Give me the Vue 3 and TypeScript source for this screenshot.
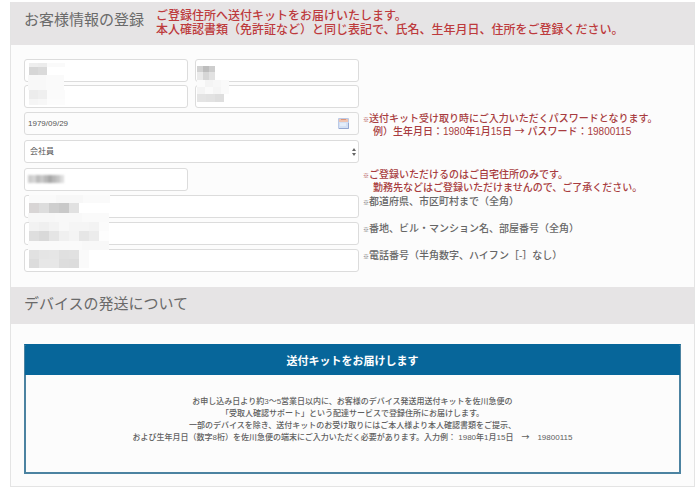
<script setup lang="ts">
import { ref } from 'vue'

interface Cell {
  x: number
  y: number
  w: number
  h: number
  c: string
}

const lastName = ref('')
const firstName = ref('')
const lastKana = ref('')
const firstKana = ref('')
const birthday = ref('1979/09/29')
const job = ref('会社員')
const postcode = ref('')
const address = ref('')
const building = ref('')
const phone = ref('')

// One strip of equally wide cells, left to right.
function strip(x: number, y: number, w: number, h: number, colors: string[]): Cell[] {
  return colors.map((c, i) => ({ x: x + i * w, y, w, h, c }))
}

// Pixelation that hides the personal values.
const mosaic: Cell[] = [
  ...strip(5, 4, 9, 4, ['#eeeeee', '#ececec', '#fafafa', '#fafafa']),
  ...strip(5, 8, 9, 8, ['#d6d6d6', '#dadada']),
  ...strip(4, 16, 18, 15, ['#f8f8f8', '#fafafa']),
  ...strip(5, 31, 9, 9, ['#ececec', '#efefef', '#fbfbfb', '#fbfbfb']),
  ...strip(5, 40, 9, 6, ['#f5f5f5', '#f7f7f7', '#fcfcfc', '#fcfcfc']),
  ...strip(173, 7, 6, 6, ['#d2d2d2', '#bdbdbd', '#cdcdcd']),
  ...strip(173, 13, 6, 8, ['#eaeaea', '#d6d6d6', '#e2e2e2']),
  ...strip(173, 21, 8, 7, ['#fbfbfb', '#f4f4f4', '#f7f7f7', '#fafafa']),
  ...strip(173, 28, 8, 7, ['#f4f4f4', '#fafafa', '#f5f5f5', '#fafafa']),
  ...strip(173, 35, 9, 8, ['#e4e4e4', '#e2e2e2', '#dedede']),
  ...strip(5, 136, 27, 8, ['#fafafa', '#f7f7f7', '#fafafa']),
  ...strip(5, 144, 10, 10, ['#d8d5d5', '#dddddd', '#cecece', '#c9c9c9', '#e1e1e1']),
  ...strip(4, 154, 27, 9, ['#f7f7f7', '#f8f8f8', '#fafafa']),
  ...strip(5, 163, 10, 9, ['#f2f2f2', '#efefef', '#f3f3f3', '#f8f8f8', '#f5f5f5', '#f5f5f5', '#f3f3f3', '#fbfbfb']),
  ...strip(5, 172, 10, 10, ['#dedede', '#d9d9d9', '#e5e5e5', '#f0f0f0', '#f4f4f4', '#e6e6e6', '#ececec', '#fdfdfd']),
  ...strip(4, 182, 27, 9, ['#fafafa', '#fafafa', '#f8f8f8']),
  ...strip(5, 191, 10, 9, ['#e1e1e1', '#e5e5e5', '#e6e6e6', '#e0e0e0', '#e1e1e1', '#fafafa']),
  ...strip(5, 200, 10, 9, ['#dcdcdc', '#e7e7e7', '#e7e7e7', '#dddddd', '#dcdcdc', '#fafafa']),
]

const softened: Cell[] = [
  ...strip(4, 116, 4, 8, ['#cccccc', '#d5d5d5', '#bcbcbc', '#c9c9c9', '#b8b8b8', '#a8a8a8', '#b8b8b8', '#c6c6c6', '#dddddd']),
]
</script>

<template>
  <main class="panel">
    <header class="bar">
      <h2 class="title">お客様情報の登録</h2>
      <p class="alert">
        ご登録住所へ送付キットをお届けいたします。<br />
        本人確認書類（免許証など）と同じ表記で、氏名、生年月日、住所をご登録ください。
      </p>
    </header>

    <form class="form" @submit.prevent>
      <div class="fields">
        <div class="group names">
          <div class="row">
            <div class="pair">
              <input v-model="lastName" class="field" type="text" aria-label="姓" />
              <input v-model="firstName" class="field" type="text" aria-label="名" />
            </div>
          </div>
          <div class="row">
            <div class="pair">
              <input v-model="lastKana" class="field" type="text" aria-label="セイ" />
              <input v-model="firstKana" class="field" type="text" aria-label="メイ" />
            </div>
          </div>
        </div>

        <div class="group profile">
          <div class="row">
            <div class="control">
              <input id="birthday" v-model="birthday" class="field dated" type="text" />
              <svg class="calendar" viewBox="0 0 11 11" aria-hidden="true">
                <rect x="0" y="0" width="11" height="11" rx="1" fill="#bccae6" />
                <rect x="1" y="1" width="9" height="9" fill="#d3e0f4" />
                <rect x="1" y="1" width="9" height="3" fill="#efc4b2" />
                <rect x="3" y="1" width="5" height="1" fill="#dd967a" />
                <rect x="2" y="5" width="6" height="3" fill="#e3edfa" />
                <path d="M1 10.5h9.5V5" fill="none" stroke="#93a7d2" />
              </svg>
            </div>
            <label class="note red" for="birthday">
              <span class="mark">※</span>送付キット受け取り時にご入力いただくパスワードとなります。
              <span class="indent">例）生年月日：1980年1月15日 <span class="arrow">→</span> パスワード：19800115</span>
            </label>
          </div>
          <div class="row">
            <div class="control">
              <select v-model="job" class="field select" aria-label="職業">
                <option>会社員</option>
              </select>
              <svg class="arrows" viewBox="0 0 4 8" aria-hidden="true">
                <path d="M0 3L2 0L4 3ZM0 5L2 8L4 5Z" fill="#666" />
              </svg>
            </div>
          </div>
        </div>

        <div class="group address">
          <div class="row">
            <div class="pair">
              <input id="postcode" v-model="postcode" class="field" type="text" />
            </div>
            <label class="note red" for="postcode">
              <span class="mark">※</span>ご登録いただけるのはご自宅住所のみです。
              <span class="indent">勤務先などはご登録いただけませんので、ご了承ください。</span>
            </label>
          </div>
          <div class="row">
            <input id="address" v-model="address" class="field" type="text" />
            <label class="note" for="address"><span class="mark">※</span>都道府県、市区町村まで（全角）</label>
          </div>
          <div class="row">
            <input id="building" v-model="building" class="field" type="text" />
            <label class="note" for="building"><span class="mark">※</span>番地、ビル・マンション名、部屋番号（全角）</label>
          </div>
          <div class="row">
            <input id="phone" v-model="phone" class="field" type="text" />
            <label class="note" for="phone"><span class="mark">※</span>電話番号（半角数字、ハイフン［-］なし）</label>
          </div>
        </div>

        <svg class="mosaic" width="240" height="213" viewBox="0 0 240 213" aria-hidden="true">
          <rect v-for="(m, i) in mosaic" :key="i" :x="m.x" :y="m.y" :width="m.w" :height="m.h" :fill="m.c" />
          <g class="soft">
            <rect v-for="(m, i) in softened" :key="i" :x="m.x" :y="m.y" :width="m.w" :height="m.h" :fill="m.c" />
          </g>
        </svg>
      </div>
    </form>

    <header class="bar device">
      <h2 class="title">デバイスの発送について</h2>
    </header>

    <div class="delivery">
      <section class="card">
        <h3 class="card-title">送付キットをお届けします</h3>
        <p class="card-text">
          お申し込み日より約3〜5営業日以内に、お客様のデバイス発送用送付キットを佐川急便の<br />
          「受取人確認サポート」という配達サービスで登録住所にお届けします。<br />
          一部のデバイスを除き、送付キットのお受け取りにはご本人様より本人確認書類をご提示、<br />
          および生年月日（数字8桁）を佐川急便の端末にご入力いただく必要があります。入力例： 1980年1月15日　<span class="arrow">→</span>　19800115
        </p>
      </section>
    </div>
  </main>
</template>

<style>
body {
  background: #fff;
}
</style>

<style scoped>
.panel {
  margin: 2px 5px 5px 10px;
  border: 1px solid #e4e4e4;
  border-top: 0;
  background: #fcfcfc;
  color: #666;
  font-family: "Liberation Sans", "Noto Sans CJK JP", sans-serif;
  line-height: 12px;
}

.panel * {
  box-sizing: border-box;
}

.bar {
  display: flex;
  gap: 12px;
  padding: 7px 13px 8px;
  background: #e6e4e5;
}

.device {
  padding: 6px 13px 9px;
}

.title {
  margin: 0;
  font-size: 15px;
  font-weight: 400;
  line-height: 22px;
  white-space: nowrap;
  color: #6a6a6a;
}

.alert {
  margin: 0;
  font-size: 12px;
  font-weight: 500;
  line-height: 14px;
  white-space: nowrap;
  color: #bd3a3c;
}

.form {
  padding: 14px 13px 15px;
}

.fields {
  position: relative;
  display: flex;
  flex-direction: column;
}

.group {
  display: grid;
}

.names {
  gap: 3px;
  margin-bottom: 4px;
}

.profile {
  gap: 5px;
  margin-bottom: 5px;
}

.address {
  gap: 4px;
}

.row {
  display: grid;
  grid-template-columns: minmax(0, 335fr) minmax(0, 318fr);
  column-gap: 4px;
  height: 23px;
}

.pair {
  display: grid;
  grid-template-columns: 1fr 1fr;
  gap: 7px;
}

.control {
  position: relative;
}

.field {
  display: block;
  width: 100%;
  height: 23px;
  margin: 0;
  padding: 0 3px;
  border: 1px solid #dcdcdc;
  border-radius: 3px;
  background: #fff;
  color: #555;
  font-family: inherit;
  font-size: 8px;
}

.dated {
  background: #fcfcfc;
}

.select {
  appearance: none;
  padding: 0 5px;
}

.calendar {
  position: absolute;
  top: 6px;
  right: 10px;
  width: 11px;
  height: 11px;
}

.arrows {
  position: absolute;
  top: 8px;
  right: 3px;
  width: 4px;
  height: 8px;
  pointer-events: none;
}

.note {
  padding-top: 1px;
  font-size: 10px;
  font-weight: 500;
  line-height: 12px;
  white-space: nowrap;
}

.red {
  color: #a83c40;
}

.mark {
  font-size: 6px;
  font-weight: 700;
}

.arrow {
  font-family: "Noto Sans CJK JP", sans-serif;
  line-height: 1;
}

.indent {
  display: block;
  padding-left: 10px;
}

.mosaic {
  position: absolute;
  top: 0;
  left: 0;
  pointer-events: none;
  shape-rendering: crispEdges;
}

.soft {
  filter: blur(1px);
}

.delivery {
  padding: 20px 13px 12px;
}

.card {
  border: 2px solid #4c83a1;
  border-top-color: #07669a;
}

.card-title {
  margin: 0 -1px;
  padding: 8px 0 7px;
  background: #07669a;
  color: #fff;
  font-size: 11px;
  font-weight: 700;
  line-height: 14px;
  text-align: center;
}

.card-text {
  margin: 0;
  padding: 21px 0 28px;
  font-size: 8px;
  font-weight: 500;
  line-height: 12px;
  text-align: center;
  white-space: nowrap;
  color: #606060;
}
</style>
